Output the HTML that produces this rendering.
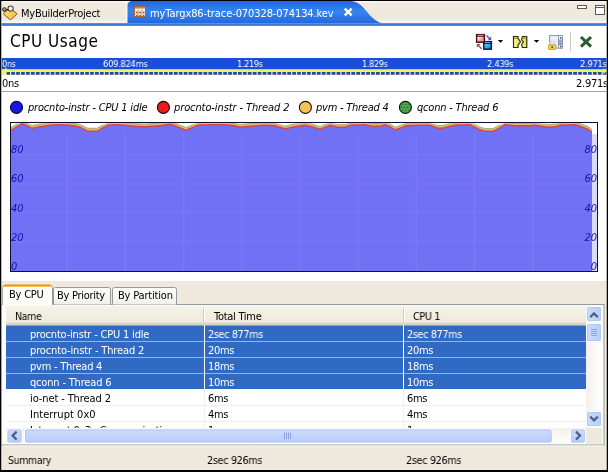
<!DOCTYPE html>
<html><head><meta charset="utf-8"><title>CPU Usage</title>
<style>
html,body{margin:0;padding:0;}
body{width:608px;height:472px;position:relative;overflow:hidden;background:#efe9dd;font-family:"DejaVu Sans Condensed","Liberation Sans",sans-serif;font-size:11px;color:#000;}
.a{position:absolute;}
.t{position:absolute;white-space:nowrap;line-height:14px;transform-origin:0 0;will-change:transform;}
.w{color:#fff;}
.i{font-style:italic;}
.ax{font-size:11px;font-style:italic;fill:#1212b0;}
</style></head><body>
<!-- tab bar -->
<div class="a" id="tabbar" style="left:0;top:0;width:608px;height:24px;background:linear-gradient(#000 0,#000 1px,#f9f7f0 1px,#f9f7f0 2px,#f0eadf 3px,#efe9dc 19px,#f6f4ec 21.5px,#fbfaf6 23px);"></div>
<svg class="a" style="left:0;top:0" width="608" height="27" viewBox="0 0 608 27">
  <defs><linearGradient id="tg" x1="0" y1="0" x2="0" y2="1"><stop offset="0" stop-color="#2565dc"/><stop offset="0.45" stop-color="#3584f2"/><stop offset="1" stop-color="#2466da"/></linearGradient></defs>
  <path d="M127.5 24 V6 Q127.5 1 132.5 1 H350 C366 1 368 23 386 23.5 V24 Z" fill="url(#tg)"/>
  <rect x="0" y="23" width="608" height="1" fill="#5690e2"/><rect x="0" y="24" width="608" height="1" fill="#3f7ad6"/><rect x="0" y="25" width="608" height="0.8" fill="#3a6fcb"/>
  <path d="M126.5 22V6" stroke="#fbfaf6" stroke-width="1" fill="none"/>
</svg>
<!-- content -->
<div class="a" id="content" style="left:1px;top:26px;width:606px;height:255px;background:#fff;"></div>
<svg class="a" id="icons" style="left:0;top:0" width="608" height="56" viewBox="0 0 608 56">
<defs>
<linearGradient id="rw" x1="0" y1="0" x2="1" y2="1"><stop offset="0.25" stop-color="#fff"/><stop offset="0.7" stop-color="#e88c8c"/><stop offset="1" stop-color="#f0b0b0"/></linearGradient>
<linearGradient id="bw" x1="0" y1="0" x2="1" y2="1"><stop offset="0" stop-color="#7fe0fa"/><stop offset="0.55" stop-color="#28b0ec"/><stop offset="1" stop-color="#1c60d0"/></linearGradient>
<linearGradient id="yp" x1="0" y1="0" x2="1" y2="0"><stop offset="0" stop-color="#ffffa8"/><stop offset="1" stop-color="#e6d22c"/></linearGradient>
<linearGradient id="fold" x1="0" y1="0" x2="1" y2="1"><stop offset="0" stop-color="#fde38a"/><stop offset="1" stop-color="#f0b83a"/></linearGradient>
</defs>
<!-- project icon -->
<path d="M9.8 8.2L16.6 13.2Q17.2 13.9 16.6 14.6L11.2 19.3Q10.4 19.8 9.6 19.3L4 14.6Q3.4 13.8 4 13Z" fill="url(#fold)" stroke="#8a5a14" stroke-width="1"/>
<circle cx="10.6" cy="8.6" r="2.6" fill="#f4f4f4" stroke="#4a4038" stroke-width="1.1"/>
<circle cx="4.4" cy="9.4" r="1.7" fill="#c8b478" stroke="#3a2c20" stroke-width="1.1"/>
<path d="M6 9.6H8.2" stroke="#3a2c20" stroke-width="1.2"/>
<!-- trace file icon -->
<rect x="134.5" y="6.5" width="11" height="10" fill="#fff" stroke="#a86a30" stroke-width="1"/>
<path d="M135 7.8H145" stroke="#c08848" stroke-width="1.6"/>
<path d="M135 11.2H145M135 13.8H145M138.4 9V16M142 9V16" stroke="#cfa070" stroke-width="0.8"/>
<path d="M136 12.6h1.8m1.6 0h1.8m1.6 0h1.6M136 15.4h1.8m1.6 0h1.8m1.6 0h1.6" stroke="#8a4a18" stroke-width="1"/>
<!-- tab close -->
<path d="M344.8 8.6L351.6 15.4M351.6 8.6L344.8 15.4" stroke="#fff" stroke-width="2.5" fill="none"/>
<!-- min / max -->
<rect x="577.5" y="5.5" width="9" height="3" fill="#fff" stroke="#5a5a54"/>
<rect x="595.5" y="5.5" width="9" height="9" fill="#fff" stroke="#5a5a54"/>
<path d="M596 7.5H604" stroke="#5a5a54"/>
<!-- toolbar icon 1 -->
<rect x="476.6" y="34.6" width="7.8" height="7.6" fill="url(#rw)" stroke="#470810" stroke-width="1.4"/>
<rect x="476" y="34" width="9" height="2.8" fill="#5c0c16"/>
<path d="M477.5 35.4H483.5" stroke="#f4c8c8" stroke-width="0.8"/>
<rect x="483.8" y="41.8" width="7.6" height="7.4" fill="url(#bw)" stroke="#060c44" stroke-width="1.4"/>
<rect x="483.2" y="41.2" width="8.8" height="2.8" fill="#08104c"/>
<path d="M484.6 42.6H490.4" stroke="#c8d4f4" stroke-width="0.8"/>
<path d="M486.4 35.4L490 39" stroke="#3c5cb4" stroke-width="1.3" fill="none"/>
<path d="M491.2 36.6V40.2H487.6Z" fill="#3c5cb4"/>
<path d="M481.6 48.8L478.2 45.4" stroke="#a83444" stroke-width="1.3" fill="none"/>
<path d="M476.8 47.6V44H480.4Z" fill="#a83444"/>
<path d="M497.8 40H503.2L500.5 42.8Z" fill="#000"/>
<!-- toolbar icon 2 -->
<path d="M513.5 36.5H518V38.4L520.6 41.8L518 45.2V47.5H513.5Z" fill="url(#yp)" stroke="#2c2c08" stroke-width="1.15"/>
<path d="M514 38.2H517.6" stroke="#6a6a20" stroke-width="0.9"/>
<path d="M522.4 36.5H526.8V47.5H522.4L521.6 44.6L523.4 42L521.6 39.6Z" fill="url(#yp)" stroke="#2c2c08" stroke-width="1.15"/>
<path d="M522.6 38.2H526.4" stroke="#6a6a20" stroke-width="0.9"/>
<path d="M533.8 40H539.2L536.5 42.8Z" fill="#000"/>
<!-- toolbar icon 3 -->
<rect x="549.5" y="35.5" width="13" height="12.6" fill="#e9eef8" stroke="#8c9cb6" stroke-width="1"/>
<rect x="558.5" y="35.5" width="4" height="12.6" fill="#f8f8fc" stroke="#8c9cb6" stroke-width="1"/>
<rect x="559" y="40.4" width="3" height="3.8" fill="#93a9d2"/>
<path d="M558.5 40H562.5M558.5 44.6H562.5" stroke="#70809c" stroke-width="0.9"/>
<rect x="560" y="37.2" width="1.4" height="1.4" fill="#303848"/>
<rect x="560" y="45.8" width="1.4" height="1.4" fill="#303848"/>
<path d="M550 45V43.6A2.4 2.4 0 0 1 554.8 43.6V45" fill="none" stroke="#d8d8d8" stroke-width="1.4"/>
<rect x="548.4" y="44.8" width="7.4" height="4.6" rx="0.6" fill="#f4d458" stroke="#c09a28" stroke-width="0.9"/>
<rect x="551.4" y="46.2" width="1.5" height="1.9" fill="#503c10"/>
<!-- separator -->
<path d="M570.5 32.5V51.5" stroke="#c9c7ba"/>
<!-- green X -->
<path d="M581 37L591 46.6M591 37L581 46.6" stroke="#2c5a32" stroke-width="3.1" fill="none"/>
</svg>

<!-- timeline -->
<svg class="a" id="tl" style="left:0;top:56px" width="608" height="38" viewBox="0 56 608 38">
  <rect x="1" y="58" width="606" height="11.5" fill="#174edb"/>
  <rect x="1" y="69.5" width="606" height="2.3" fill="#ecf25c"/>
  <rect x="1" y="71.8" width="606" height="3" fill="#e4e8b4"/>
  <path d="M6.3 73.4H606.5" stroke="#2446a4" stroke-width="2.9" stroke-dasharray="3.7 1.23" fill="none"/>
  <path d="M1.2 71.6L6.6 67.4V75.6Z" fill="#f4f65c"/>
  <path d="M606.8 71L603.4 68.2V74.2Z" fill="#ecf25c"/>
  <rect x="1" y="91" width="606" height="1" fill="#a0a0a0"/>
</svg>
<!-- legend -->
<svg class="a" id="leg" style="left:0;top:98px" width="608" height="20" viewBox="0 98 608 20">
  <circle cx="16.5" cy="107.4" r="6" fill="#1818e6" stroke="#04043c" stroke-width="1.1"/>
  <circle cx="163.4" cy="107.4" r="6" fill="#f01a1a" stroke="#1c0404" stroke-width="1.1"/>
  <circle cx="305.4" cy="107.4" r="6" fill="#f8c256" stroke="#1c1404" stroke-width="1.1"/>
  <circle cx="405.4" cy="107.4" r="6" fill="#4fa44f" stroke="#041c04" stroke-width="1.1"/>
  <path d="M402 104.5h1.2m2 0h1.2m2 0h1.2M400.6 107.4h1.2m2 0h1.2m2 0h1.2m2 0h1M402 110.3h1.2m2 0h1.2m2 0h1.2" stroke="#1c6c24" stroke-width="1.1"/>
</svg>
<!-- chart -->
<svg class="a" id="chartsvg" style="left:0;top:118px;will-change:transform" width="608" height="158" viewBox="0 118 608 158">
<rect x="10.5" y="122.5" width="587" height="149" fill="#fff" stroke="#101030"/>
<rect x="592" y="134" width="5" height="137" fill="#dadafa"/>
<polygon points="11,271 11,127 16,124 22,123 27,123 32,125 40,123.5 50,123 60,123 70,123 76,123 80,124 84,126 88,127.8 97,127.8 102,125 108,123 115,123 125,123 135,123 145,123.5 152,123 160,123 170,123 176,123 186,127 192,124.5 198,123 210,123 225,123 235,123 240,124 250,123 265,123 275,123 285,125.5 295,123.5 305,123 312,123.5 320,126 325,124 330,123 338,124 345,124 350,123 365,123 372,123 380,123 385,123 390,123.5 395,126.5 400,125 406,123 418,123 430,123 438,125 442,125 448,123.5 455,123 470,123 475,124 480,126.5 485,128 493,128 499,125 505,123 515,123 530,123 535,123 548,124 555,123.5 560,123 575,123 580,123 588,126 592,129 592,271" fill="#a9b97c"/>
<polygon points="11,271 11,128.5 16,125.5 22,123 27,124 32,126.5 40,125 50,123.5 60,123 70,123.5 76,124.5 80,125.5 84,127.5 88,129.3 97,129.3 102,126.5 108,123.5 115,123 125,123.5 135,124.5 145,125 152,124.5 160,124 170,123 176,124.5 186,128.5 192,126 198,123.5 210,123 225,123 235,124 240,125.5 250,124.5 265,123.5 275,124 285,127 295,125 305,123.5 312,125 320,127.5 325,125.5 330,123.5 338,125.5 345,125.5 350,123.5 365,123 372,124.5 380,124.5 385,123 390,125 395,128 400,126.5 406,124 418,123.5 430,123.5 438,126.5 442,126.5 448,125 455,123.5 470,123 475,125.5 480,128 485,129.5 493,129.5 499,126.5 505,123 515,124 530,124 535,123.5 548,125.5 555,125 560,123.5 575,123 580,124.5 588,127.5 592,130.5 592,271" fill="#f0b878"/>
<polygon points="11,271 11,129.6 16,126.6 22,123.1 27,125.1 32,127.6 40,126.1 50,124.6 60,124.1 70,124.6 76,125.6 80,126.6 84,128.6 88,130.4 97,130.4 102,127.6 108,124.6 115,124.1 125,124.6 135,125.6 145,126.1 152,125.6 160,125.1 170,123.6 176,125.6 186,129.6 192,127.1 198,124.6 210,124.1 225,124.1 235,125.1 240,126.6 250,125.6 265,124.6 275,125.1 285,128.1 295,126.1 305,124.6 312,126.1 320,128.6 325,126.6 330,124.6 338,126.6 345,126.6 350,124.6 365,124.1 372,125.6 380,125.6 385,124.1 390,126.1 395,129.1 400,127.6 406,125.1 418,124.6 430,124.6 438,127.6 442,127.6 448,126.1 455,124.6 470,124.1 475,126.6 480,129.1 485,130.6 493,130.6 499,127.6 505,124.1 515,125.1 530,125.1 535,124.6 548,126.6 555,126.1 560,124.6 575,124.1 580,125.6 588,128.6 592,131.6 592,271" fill="#d84444"/>
<polygon points="11,271 11,131 16,128 22,124.5 27,126.5 32,129 40,127.5 50,126 60,125.5 70,126 76,127 80,128 84,130 88,131.8 97,131.8 102,129 108,126 115,125.5 125,126 135,127 145,127.5 152,127 160,126.5 170,125 176,127 186,131 192,128.5 198,126 210,125.5 225,125.5 235,126.5 240,128 250,127 265,126 275,126.5 285,129.5 295,127.5 305,126 312,127.5 320,130 325,128 330,126 338,128 345,128 350,126 365,125.5 372,127 380,127 385,125.5 390,127.5 395,130.5 400,129 406,126.5 418,126 430,126 438,129 442,129 448,127.5 455,126 470,125.5 475,128 480,130.5 485,132 493,132 499,129 505,125.5 515,126.5 530,126.5 535,126 548,128 555,127.5 560,126 575,125.5 580,127 588,130 592,133 592,271" fill="#7171f6"/>
<path d="M11 155H592 M11 184H592 M11 212H592 M11 242H592 M67.2 133V271 M125.4 133V271 M183.60000000000002 133V271 M241.8 133V271 M300.0 133V271 M358.2 133V271 M416.40000000000003 133V271 M474.6 133V271 M532.8000000000001 133V271" stroke="#8c8cf6" stroke-width="1.6" fill="none" opacity="0.3"/>
<text x="11" y="153" class="ax">80</text>
<text x="597" y="153" class="ax" text-anchor="end">80</text>
<text x="11" y="182" class="ax">60</text>
<text x="597" y="182" class="ax" text-anchor="end">60</text>
<text x="11" y="211.5" class="ax">40</text>
<text x="597" y="211.5" class="ax" text-anchor="end">40</text>
<text x="11" y="241" class="ax">20</text>
<text x="597" y="241" class="ax" text-anchor="end">20</text>
<text x="11" y="270" class="ax">0</text>
<text x="597" y="270" class="ax" text-anchor="end">0</text>
</svg>
<!-- lower panel -->
<svg class="a" id="lower" style="left:0;top:280px" width="608" height="192" viewBox="0 280 608 192">
<defs>
<linearGradient id="itab" x1="0" y1="0" x2="0" y2="1"><stop offset="0" stop-color="#ffffff"/><stop offset="1" stop-color="#f0f0ea"/></linearGradient>
<linearGradient id="hdr" x1="0" y1="0" x2="0" y2="1"><stop offset="0" stop-color="#fdfcf8"/><stop offset="0.08" stop-color="#f4f2e6"/><stop offset="0.8" stop-color="#efecde"/><stop offset="0.88" stop-color="#dedbc9"/><stop offset="1" stop-color="#cbc7b8"/></linearGradient>
<linearGradient id="sbv" x1="0" y1="0" x2="1" y2="0"><stop offset="0" stop-color="#cddcfc"/><stop offset="1" stop-color="#b6ccf8"/></linearGradient>
<linearGradient id="sbh" x1="0" y1="0" x2="0" y2="1"><stop offset="0" stop-color="#cddcfc"/><stop offset="1" stop-color="#b6ccf8"/></linearGradient>
<linearGradient id="trv" x1="0" y1="0" x2="1" y2="0"><stop offset="0" stop-color="#f3f1ec"/><stop offset="1" stop-color="#fefefb"/></linearGradient>
<linearGradient id="trh" x1="0" y1="0" x2="0" y2="1"><stop offset="0" stop-color="#f3f1ec"/><stop offset="1" stop-color="#fefefb"/></linearGradient>
</defs>
<rect x="1.5" y="304.5" width="602.5" height="140.5" fill="#fcfcfa" stroke="#919b9c"/>
<rect x="3" y="445.5" width="601" height="1" fill="#fbfaf5"/>
<path d="M53.5 304.5V289.5Q53.5 287.5 55.5 287.5H108.5Q110.5 287.5 110.5 289.5V304.5" fill="url(#itab)" stroke="#919b9c"/>
<path d="M112.5 304.5V289.5Q112.5 287.5 114.5 287.5H174.5Q176.5 287.5 176.5 289.5V304.5" fill="url(#itab)" stroke="#919b9c"/>
<path d="M2 306V287Q2 284.5 5 284.5H50Q52.5 284.5 52.5 287V305H3Z" fill="#fcfcfa"/>
<path d="M2.3 305V287.5Q2.3 285.5 5 285.5H50Q52.5 285.5 52.5 287.5V304.5" fill="none" stroke="#919b9c"/>
<path d="M3.2 286.6Q3.5 284.5 5.5 284.5H49.5Q51.5 284.5 51.8 286.6Z" fill="#e68b2c"/>
<path d="M3 286.5H52" stroke="#ffc73c" stroke-width="1"/>
<rect x="6" y="305" width="580" height="123" fill="#fff"/>
<rect x="6" y="305" width="580" height="20.6" fill="url(#hdr)"/>
<path d="M203.5 308V322" stroke="#d2cfbe"/><path d="M204.5 308V322" stroke="#fff"/>
<path d="M403.5 308V322" stroke="#d2cfbe"/><path d="M404.5 308V322" stroke="#fff"/>
<rect x="6" y="325.5" width="580" height="15.5" fill="#316ac5"/>
<rect x="6" y="341" width="580" height="1" fill="#fff"/>
<rect x="6" y="341.5" width="580" height="15.5" fill="#316ac5"/>
<rect x="6" y="357" width="580" height="1" fill="#fff"/>
<rect x="6" y="357.5" width="580" height="15.5" fill="#316ac5"/>
<rect x="6" y="373" width="580" height="1" fill="#fff"/>
<rect x="6" y="373.5" width="580" height="15.5" fill="#316ac5"/>
<rect x="6" y="389" width="580" height="1" fill="#fff"/>
<rect x="6" y="405" width="580" height="1" fill="#eeeeee"/>
<rect x="6" y="421" width="580" height="1" fill="#eeeeee"/>
<path d="M204.5 325.5V428M403.5 325.5V428" stroke="#f0f0f0"/>
<path d="M204.5 325.5V389.5M403.5 325.5V389.5" stroke="#fff"/>
<rect x="586" y="305" width="16" height="123" fill="url(#trv)"/>
<rect x="586.5" y="306.5" width="15" height="15" rx="2" fill="url(#sbv)" stroke="#fff"/><rect x="587.5" y="307.5" width="13" height="13" rx="1.5" fill="none" stroke="#b4c8f0" stroke-width="1"/>
<rect x="586.5" y="411.5" width="15" height="15" rx="2" fill="url(#sbv)" stroke="#fff"/><rect x="587.5" y="412.5" width="13" height="13" rx="1.5" fill="none" stroke="#b4c8f0" stroke-width="1"/>
<rect x="586.5" y="323.5" width="15" height="18" rx="2" fill="url(#sbv)" stroke="#fff"/><rect x="587.5" y="324.5" width="13" height="16" rx="1.5" fill="none" stroke="#b4c8f0" stroke-width="1"/>
<path d="M590.2 317.2L594 313.4L597.8 317.2" fill="none" stroke="#4d6185" stroke-width="2.2"/>
<path d="M590.2 416.6L594 420.4L597.8 416.6" fill="none" stroke="#4d6185" stroke-width="2.2"/>
<path d="M591 329.5H597M591 331.5H597M591 333.5H597M591 335.5H597" stroke="#8aa4dc" stroke-width="1"/>
<rect x="6" y="428" width="580" height="16" fill="url(#trh)"/>
<rect x="586" y="428" width="16" height="16" fill="#efe9dd"/>
<rect x="7.0" y="429.0" width="15" height="14" rx="2" fill="url(#sbh)" stroke="#fff"/><rect x="8.0" y="430.0" width="13" height="12" rx="1.5" fill="none" stroke="#b4c8f0" stroke-width="1"/>
<rect x="570.5" y="429.0" width="15" height="14" rx="2" fill="url(#sbh)" stroke="#fff"/><rect x="571.5" y="430.0" width="13" height="12" rx="1.5" fill="none" stroke="#b4c8f0" stroke-width="1"/>
<rect x="24.5" y="429.0" width="527.6" height="14" rx="2" fill="url(#sbh)" stroke="#fff"/><rect x="25.5" y="430.0" width="525.6" height="12" rx="1.5" fill="none" stroke="#b4c8f0" stroke-width="1"/>
<path d="M16.6 431.6L12.6 435.6L16.6 439.6" fill="none" stroke="#4d6185" stroke-width="2.2"/>
<path d="M576 431.6L580 435.6L576 439.6" fill="none" stroke="#4d6185" stroke-width="2.2"/>
<path d="M284.5 432.5V439M286.5 432.5V439M288.5 432.5V439M290.5 432.5V439" stroke="#8aa4dc" stroke-width="1"/>
</svg>
<div class="t" style="left:20.8px;top:7px;letter-spacing:-0.25px;">MyBuilderProject</div>
<div class="t w" style="left:150px;top:7px;letter-spacing:-0.09px;">myTargx86-trace-070328-074134.kev</div>
<div class="t" style="left:9.6px;top:30px;font-size:17px;line-height:22px;letter-spacing:0.53px;">CPU Usage</div>
<div class="t w tl" style="left:1.8px;top:57px;font-size:9.5px;letter-spacing:-0.30px;transform:scaleX(0.9367);">0ns</div>
<div class="t w tl" style="left:102.7px;top:57px;font-size:9.5px;letter-spacing:-0.30px;transform:scaleX(0.9818);">609.824ms</div>
<div class="t w tl" style="left:237.4px;top:57px;font-size:9.5px;letter-spacing:-0.30px;transform:scaleX(0.9439);">1.219s</div>
<div class="t w tl" style="left:362.4px;top:57px;font-size:9.5px;letter-spacing:-0.30px;transform:scaleX(0.9439);">1.829s</div>
<div class="t w tl" style="left:486.7px;top:57px;font-size:9.5px;letter-spacing:-0.30px;transform:scaleX(0.9697);">2.439s</div>
<div class="t w tl" style="left:579.7px;top:57px;font-size:9.5px;letter-spacing:-0.30px;transform:scaleX(0.9808);">2.971s</div>
<div class="t" style="left:1.8px;top:77px;letter-spacing:-0.30px;transform:scaleX(0.9801);">0ns</div>
<div class="t" style="left:575.8px;top:77px;letter-spacing:-0.25px;">2.971s</div>
<div class="t i" style="left:27.5px;top:101px;letter-spacing:-0.18px;">procnto-instr - CPU 1 idle</div>
<div class="t i" style="left:174px;top:101px;letter-spacing:-0.10px;">procnto-instr - Thread 2</div>
<div class="t i" style="left:316px;top:101px;letter-spacing:-0.24px;">pvm - Thread 4</div>
<div class="t i" style="left:416.8px;top:101px;letter-spacing:-0.20px;">qconn - Thread 6</div>
<div class="t" style="left:9.4px;top:288px;letter-spacing:-0.22px;">By CPU</div>
<div class="t" style="left:57px;top:289px;letter-spacing:-0.28px;">By Priority</div>
<div class="t" style="left:117.5px;top:289px;letter-spacing:-0.18px;">By Partition</div>
<div class="t" style="left:14.5px;top:310px;letter-spacing:-0.30px;transform:scaleX(0.9463);">Name</div>
<div class="t" style="left:214.4px;top:310px;letter-spacing:-0.27px;">Total Time</div>
<div class="t" style="left:412.5px;top:310px;letter-spacing:-0.30px;transform:scaleX(0.9693);">CPU 1</div>
<div class="t" style="left:8px;top:454px;letter-spacing:-0.30px;transform:scaleX(0.9403);">Summary</div>
<div class="t" style="left:206.8px;top:454px;letter-spacing:-0.30px;transform:scaleX(0.9716);">2sec 926ms</div>
<div class="t" style="left:405.8px;top:454px;letter-spacing:-0.30px;transform:scaleX(0.9716);">2sec 926ms</div>
<div class="a" style="left:6px;top:326px;width:580px;height:102px;overflow:hidden;">
<div class="t w" style="left:23.7px;top:2px;letter-spacing:-0.19px;">procnto-instr - CPU 1 idle</div>
<div class="t w" style="left:202px;top:2px;letter-spacing:-0.30px;transform:scaleX(0.9681);">2sec 877ms</div>
<div class="t w" style="left:401px;top:2px;letter-spacing:-0.30px;transform:scaleX(0.9681);">2sec 877ms</div>
<div class="t w" style="left:23.7px;top:18px;letter-spacing:-0.14px;">procnto-instr - Thread 2</div>
<div class="t w" style="left:202px;top:18px;letter-spacing:-0.30px;transform:scaleX(0.9954);">20ms</div>
<div class="t w" style="left:401px;top:18px;letter-spacing:-0.30px;transform:scaleX(0.9954);">20ms</div>
<div class="t w" style="left:23.7px;top:34px;letter-spacing:-0.25px;">pvm - Thread 4</div>
<div class="t w" style="left:202px;top:34px;letter-spacing:-0.30px;transform:scaleX(0.9954);">18ms</div>
<div class="t w" style="left:401px;top:34px;letter-spacing:-0.30px;transform:scaleX(0.9954);">18ms</div>
<div class="t w" style="left:23.7px;top:50px;letter-spacing:-0.18px;">qconn - Thread 6</div>
<div class="t w" style="left:202px;top:50px;letter-spacing:-0.30px;transform:scaleX(0.9954);">10ms</div>
<div class="t w" style="left:401px;top:50px;letter-spacing:-0.30px;transform:scaleX(0.9954);">10ms</div>
<div class="t" style="left:23.7px;top:66px;letter-spacing:-0.11px;">io-net - Thread 2</div>
<div class="t" style="left:202px;top:66px;letter-spacing:-0.30px;transform:scaleX(0.9955);">6ms</div>
<div class="t" style="left:401px;top:66px;letter-spacing:-0.30px;transform:scaleX(0.9955);">6ms</div>
<div class="t" style="left:23.7px;top:82px;letter-spacing:0.04px;">Interrupt 0x0</div>
<div class="t" style="left:202px;top:82px;letter-spacing:-0.30px;transform:scaleX(0.9955);">4ms</div>
<div class="t" style="left:401px;top:82px;letter-spacing:-0.30px;transform:scaleX(0.9955);">4ms</div>
<div class="t" style="left:23.7px;top:98px;letter-spacing:-0.30px;transform:scaleX(0.9940);">Interrupt 0x3 - Communication</div>
<div class="t" style="left:202px;top:98px;letter-spacing:-0.30px;transform:scaleX(0.9955);">1ms</div>
<div class="t" style="left:401px;top:98px;letter-spacing:-0.30px;transform:scaleX(0.9955);">1ms</div>
</div>
<!-- frame -->
<div class="a" style="left:0;top:0;width:608px;height:1px;background:#000;"></div>
<div class="a" style="left:0;top:0;width:1px;height:472px;background:#000;"></div>
<div class="a" style="left:1px;top:1px;width:1px;height:469px;background:#a9a799;opacity:.8"></div>
<div class="a" style="left:607px;top:0;width:1px;height:472px;background:#000;"></div>
<div class="a" style="left:606px;top:1px;width:1px;height:469px;background:#8a897f;opacity:.6"></div>
<div class="a" style="left:0;top:470px;width:608px;height:2px;background:#000;"></div>
</body></html>
